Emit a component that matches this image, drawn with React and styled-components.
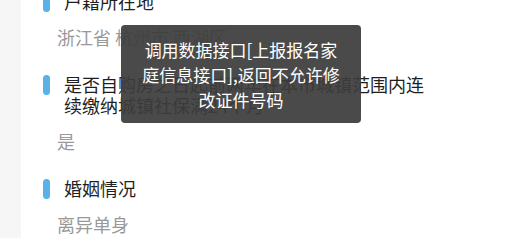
import React from "react";
import styled, { createGlobalStyle } from "styled-components";

const GlobalStyle = createGlobalStyle`
  html, body {
    margin: 0;
    padding: 0;
    background: #ffffff;
    overflow: hidden;
  }
  body {
    font-family: "Noto Sans CJK SC", "Noto Sans", sans-serif;
  }
`;

const Page = styled.div`
  position: relative;
  display: flex;
  width: 514px;
  height: 238px;
  overflow: hidden;
  background: #ffffff;
`;

const SideStrip = styled.div`
  flex: 0 0 21px;
  background: #f6f6f6;
`;

const List = styled.div`
  flex: 1;
  display: flex;
  flex-direction: column;
  gap: 26px;
  margin-top: -9px;
  padding-left: 22px;
  padding-right: 70px;
`;

const Field = styled.div`
  display: flex;
  flex-direction: column;
  gap: 15px;
`;

const LabelRow = styled.div`
  display: flex;
  align-items: flex-start;
  gap: 14px;
`;

const Marker = styled.span`
  flex: 0 0 7px;
  height: 20px;
  margin-top: 0.5px;
  border-radius: 3.5px;
  background: #58b2e8;
`;

const Label = styled.div`
  font-size: 18px;
  line-height: 21px;
  color: #1f1f1f;
  width: ${(p) => (p.$wrap ? "370px" : "auto")};
`;

const Value = styled.div`
  padding-left: 14px;
  font-size: 18px;
  line-height: 21px;
  color: #999999;
`;

const Toast = styled.div`
  position: absolute;
  left: 121px;
  top: 25px;
  width: 240px;
  height: 98px;
  box-sizing: border-box;
  padding-top: 12px;
  border-radius: 4px;
  background: rgba(60, 60, 60, 0.93);
  color: #ffffff;
  font-size: 17px;
  line-height: 25px;
  text-align: center;
`;

const fields = [
  { label: "户籍所在地", value: "浙江省 杭州市 西湖区" },
  {
    label: "是否自购房之日起前两年在本市城镇范围内连续缴纳城镇社保满24个月",
    value: "是",
    wrap: true,
  },
  { label: "婚姻情况", value: "离异单身" },
];

export default function App() {
  return (
    <>
      <GlobalStyle />
      <Page>
        <SideStrip />
        <List>
          {fields.map((f) => (
            <Field key={f.label}>
              <LabelRow>
                <Marker />
                <Label $wrap={f.wrap}>{f.label}</Label>
              </LabelRow>
              <Value>{f.value}</Value>
            </Field>
          ))}
        </List>
        <Toast>
          调用数据接口[上报报名家
          <br />
          庭信息接口],返回不允许修
          <br />
          改证件号码
        </Toast>
      </Page>
    </>
  );
}
